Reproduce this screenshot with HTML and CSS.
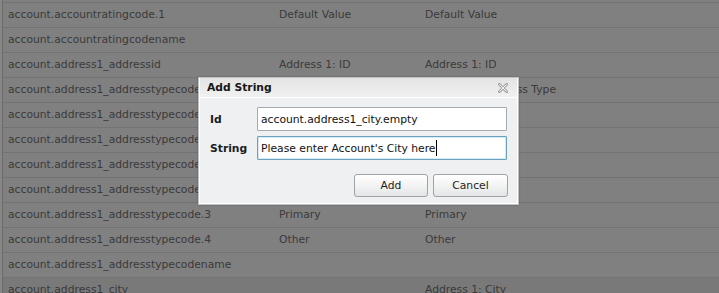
FILE: index.html
```html
<!DOCTYPE html>
<html>
<head>
<meta charset="utf-8">
<title>Add String</title>
<link rel="stylesheet" href="styles.css">
</head>
<body>
<div class="page">
  <div class="grid">
    <div class="row"><span class="c1">account.accountratingcode.1</span><span class="c2">Default Value</span><span class="c3">Default Value</span></div>
    <div class="row"><span class="c1">account.accountratingcodename</span><span class="c2"></span><span class="c3"></span></div>
    <div class="row"><span class="c1">account.address1_addressid</span><span class="c2">Address 1: ID</span><span class="c3">Address 1: ID</span></div>
    <div class="row"><span class="c1">account.address1_addresstypecode</span><span class="c2"></span><span class="c3"><span class="hid">Address 1: Addre</span>ss Type</span></div>
    <div class="row"><span class="c1">account.address1_addresstypecode.1</span><span class="c2"></span><span class="c3"></span></div>
    <div class="row"><span class="c1">account.address1_addresstypecode.2</span><span class="c2"></span><span class="c3"></span></div>
    <div class="row"><span class="c1">account.address1_addresstypecode.1</span><span class="c2"></span><span class="c3"></span></div>
    <div class="row"><span class="c1">account.address1_addresstypecode.2</span><span class="c2"></span><span class="c3"></span></div>
    <div class="row"><span class="c1">account.address1_addresstypecode.3</span><span class="c2">Primary</span><span class="c3">Primary</span></div>
    <div class="row"><span class="c1">account.address1_addresstypecode.4</span><span class="c2">Other</span><span class="c3">Other</span></div>
    <div class="row"><span class="c1">account.address1_addresstypecodename</span><span class="c2"></span><span class="c3"></span></div>
    <div class="row selected"><span class="c1">account.address1_city</span><span class="c2"></span><span class="c3">Address 1: City</span></div>
  </div>

  <div class="dialog">
    <div class="titlebar">
      <span class="title">Add String</span>
      <svg class="close" width="10" height="10" viewBox="0 0 10 10">
        <path d="M1 1 L9 9 M9 1 L1 9" stroke="#a9a9a9" stroke-width="3" stroke-linecap="square" fill="none"/>
        <path d="M1.5 1.5 L8.5 8.5 M8.5 1.5 L1.5 8.5" stroke="#f2f2f2" stroke-width="1" fill="none"/>
      </svg>
    </div>
    <div class="body">
      <div class="form-row">
        <label class="label" for="fid">Id</label>
        <input class="field" id="fid" type="text" value="account.address1_city.empty">
      </div>
      <div class="form-row">
        <label class="label" for="fstr">String</label>
        <div class="field-wrap">
          <input class="field focused" id="fstr" type="text" value="Please enter Account's City here">
          <span class="caret"></span>
        </div>
      </div>
      <div class="buttons">
        <button class="btn btn-add" type="button">Add</button>
        <button class="btn btn-cancel" type="button">Cancel</button>
      </div>
    </div>
  </div>
</div>
</body>
</html>
```

FILE: styles.css
```css
html, body {
  margin: 0;
  padding: 0;
}
body {
  width: 719px;
  height: 293px;
  overflow: hidden;
  background: #878787;
  font-family: "DejaVu Sans", Verdana, sans-serif;
  font-size: 10.75px;
}
.page {
  position: relative;
  width: 719px;
  height: 293px;
}
.grid {
  margin-left: 2px;
  border-left: 1px solid #6b6b6b;
  background: #808080;
  padding-top: 2px;
  height: 291px;
  overflow: hidden;
}
.row {
  display: flex;
  height: 24px;
  line-height: 24px;
  border-top: 1px solid #737373;
  color: #3a3a3a;
  white-space: nowrap;
}
.row.selected {
  background: #797979;
}
.c1 {
  width: 271px;
  padding-left: 5px;
  flex: none;
}
.c2 {
  width: 146px;
  flex: none;
}
.c3 {
  flex: 1;
}
.hid {
  visibility: hidden;
}

.dialog {
  position: absolute;
  left: 198px;
  top: 77px;
  width: 321px;
  height: 128px;
  box-sizing: border-box;
  border: 1px solid #bfc2c5;
  background: #fff;
  padding: 0 1px 1px 1px;
  display: flex;
  flex-direction: column;
  box-shadow: 0 0 2px rgba(0, 0, 0, 0.25);
}
.titlebar {
  height: 19px;
  display: flex;
  align-items: center;
  justify-content: space-between;
  padding: 0 9px 0 7px;
  background: linear-gradient(#e3e3e3, #f1f1f1);
  border-bottom: 1px solid #fff;
}
.title {
  font-weight: bold;
  color: #161616;
  font-size: 10.75px;
}
.close {
  display: block;
  margin-top: 1px;
}
.body {
  flex: 1;
  background: #eef0f2;
  padding: 9px 9px 0 9px;
  display: flex;
  flex-direction: column;
}
.form-row {
  display: flex;
  align-items: center;
  height: 24px;
  margin-bottom: 5px;
}
.label {
  width: 48px;
  font-weight: bold;
  color: #1c1c1c;
  padding-left: 1px;
  box-sizing: border-box;
}
.field-wrap {
  position: relative;
  width: 250px;
  height: 24px;
}
.field {
  width: 250px;
  height: 24px;
  box-sizing: border-box;
  border: 1px solid #a4aab1;
  background: #fff;
  padding: 0 3px;
  margin: 0;
  font-family: "DejaVu Sans", Verdana, sans-serif;
  font-size: 10.75px;
  color: #111;
  outline: none;
  border-radius: 1px;
}
.field.focused {
  border-color: #6aa3bd;
  box-shadow: inset 0 0 0 1px #d7e9f2;
}
.caret {
  position: absolute;
  left: 179px;
  top: 4px;
  width: 1px;
  height: 16px;
  background: #000;
}
.buttons {
  display: flex;
  justify-content: flex-end;
  gap: 5px;
  margin-top: 9px;
}
.btn {
  height: 23px;
  box-sizing: border-box;
  border: 1px solid #9ea3a8;
  border-radius: 3px;
  background: linear-gradient(#ffffff, #f3f3f3 50%, #e3e5e7);
  font-family: "DejaVu Sans", Verdana, sans-serif;
  font-size: 10.75px;
  color: #1e1e1e;
  padding: 0;
  margin: 0;
}
.btn-add {
  width: 74px;
}
.btn-cancel {
  width: 75px;
}
```
